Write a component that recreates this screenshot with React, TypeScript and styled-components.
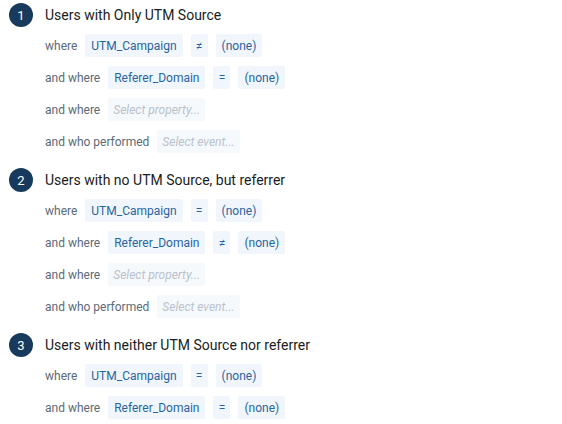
import styled, { createGlobalStyle } from 'styled-components'

const GlobalStyle = createGlobalStyle`
  body {
    margin: 0;
    background: #fff;
    font-family: Roboto, 'Liberation Sans', sans-serif;
  }
`

type Filter = {
  label: string
  property?: string
  operator?: string
  value?: string
  placeholder?: string
}

type Segment = {
  title: string
  filters: Filter[]
}

const segments: Segment[] = [
  {
    title: 'Users with Only UTM Source',
    filters: [
      { label: 'where', property: 'UTM_Campaign', operator: '≠', value: '(none)' },
      { label: 'and where', property: 'Referer_Domain', operator: '=', value: '(none)' },
      { label: 'and where', placeholder: 'Select property...' },
      { label: 'and who performed', placeholder: 'Select event...' },
    ],
  },
  {
    title: 'Users with no UTM Source, but referrer',
    filters: [
      { label: 'where', property: 'UTM_Campaign', operator: '=', value: '(none)' },
      { label: 'and where', property: 'Referer_Domain', operator: '≠', value: '(none)' },
      { label: 'and where', placeholder: 'Select property...' },
      { label: 'and who performed', placeholder: 'Select event...' },
    ],
  },
  {
    title: 'Users with neither UTM Source nor referrer',
    filters: [
      { label: 'where', property: 'UTM_Campaign', operator: '=', value: '(none)' },
      { label: 'and where', property: 'Referer_Domain', operator: '=', value: '(none)' },
    ],
  },
]

const App = () => {
  return (
    <StyledPage>
      <GlobalStyle />
      {segments.map((segment, index) => (
        <Section key={index}>
          <Header>
            <Badge>{index + 1}</Badge>
            <Title>{segment.title}</Title>
          </Header>
          <Rows>
            {segment.filters.map((filter, i) => (
              <Row key={i}>
                <Label>{filter.label}</Label>
                {filter.placeholder ? (
                  <Placeholder>{filter.placeholder}</Placeholder>
                ) : (
                  <>
                    <Chip>{filter.property}</Chip>
                    <Chip $narrow>{filter.operator}</Chip>
                    <Chip>{filter.value}</Chip>
                  </>
                )}
              </Row>
            ))}
          </Rows>
        </Section>
      ))}
    </StyledPage>
  )
}

export default App

const StyledPage = styled.div`
  padding: 3px 0 0 9px;
  display: flex;
  flex-direction: column;
  gap: 15px;
`

const Section = styled.div`
  display: flex;
  flex-direction: column;
  gap: 7px;
`

const Header = styled.div`
  display: flex;
  align-items: center;
  gap: 12px;
  height: 24px;
`

const Badge = styled.div`
  width: 24px;
  height: 24px;
  border-radius: 50%;
  background: #183a5c;
  color: #fff;
  font-size: 13px;
  display: flex;
  align-items: center;
  justify-content: center;
`

const Title = styled.div`
  font-size: 14px;
  color: #1a1d22;
`

const Rows = styled.div`
  display: flex;
  flex-direction: column;
  gap: 9px;
  padding-left: 36px;
`

const Row = styled.div`
  display: flex;
  align-items: center;
  gap: 8px;
  height: 23px;
`

const Label = styled.span`
  font-size: 12px;
  color: #5d6a78;
`

const Chip = styled.span<{ $narrow?: boolean }>`
  height: 23px;
  box-sizing: border-box;
  display: flex;
  align-items: center;
  justify-content: center;
  padding: 0 ${(props) => (props.$narrow ? '0' : '6px')};
  min-width: ${(props) => (props.$narrow ? '17px' : 'auto')};
  background: #f0f6fc;
  border-radius: 2px;
  color: #2a64a0;
  font-size: 12px;
`

const Placeholder = styled.span`
  height: 23px;
  display: flex;
  align-items: center;
  padding: 0 5px;
  background: #f6f9fc;
  border-radius: 2px;
  color: #b8c2cd;
  font-size: 12px;
  font-style: italic;
`
